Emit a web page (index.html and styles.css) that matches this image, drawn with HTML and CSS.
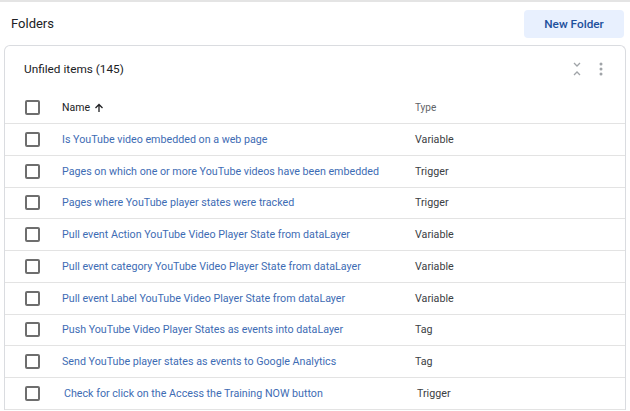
FILE: index.html
```html
<!DOCTYPE html>
<html>
<head>
<meta charset="utf-8">
<link rel="stylesheet" href="styles.css">
</head>
<body>
<div class="page">
  <div class="topbar">
    <div class="title">Folders</div>
    <button class="new-folder">New Folder</button>
  </div>
  <div class="card">
    <div class="card-head">
      <div class="card-title">Unfiled items (145)</div>
      <div class="card-actions">
        <svg class="ico" width="12" height="16" viewBox="0 0 12 16"><path d="M3 2l3 3 3-3M3 14l3-3 3 3" fill="none" stroke="#a0a4a8" stroke-width="1.3"/></svg>
        <svg class="ico" width="6" height="16" viewBox="0 0 6 16"><circle cx="3" cy="3" r="1.5" fill="#a0a4a8"/><circle cx="3" cy="8" r="1.5" fill="#a0a4a8"/><circle cx="3" cy="13" r="1.5" fill="#a0a4a8"/></svg>
      </div>
    </div>
    <div class="row head">
      <span class="cb"></span>
      <span class="name hname">Name <svg width="10" height="10" viewBox="0 0 10 10"><path d="M5 9V1.5M1.5 5L5 1.5 8.5 5" fill="none" stroke="#202124" stroke-width="1.3"/></svg></span>
      <span class="type htype">Type</span>
    </div>
    <div class="row"><span class="cb"></span><a class="name">Is YouTube video embedded on a web page</a><span class="type">Variable</span></div>
    <div class="row"><span class="cb"></span><a class="name">Pages on which one or more YouTube videos have been embedded</a><span class="type">Trigger</span></div>
    <div class="row"><span class="cb"></span><a class="name">Pages where YouTube player states were tracked</a><span class="type">Trigger</span></div>
    <div class="row"><span class="cb"></span><a class="name">Pull event Action YouTube Video Player State from dataLayer</a><span class="type">Variable</span></div>
    <div class="row"><span class="cb"></span><a class="name">Pull event category YouTube Video Player State from dataLayer</a><span class="type">Variable</span></div>
    <div class="row"><span class="cb"></span><a class="name">Pull event Label YouTube Video Player State from dataLayer</a><span class="type">Variable</span></div>
    <div class="row"><span class="cb"></span><a class="name">Push YouTube Video Player States as events into dataLayer</a><span class="type">Tag</span></div>
    <div class="row"><span class="cb"></span><a class="name">Send YouTube player states as events to Google Analytics</a><span class="type">Tag</span></div>
    <div class="row shifted"><span class="cb"></span><a class="name">Check for click on the Access the Training NOW button</a><span class="type">Trigger</span></div>
  </div>
</div>
</body>
</html>
```
FILE: styles.css
```css
* { box-sizing: border-box; }
html, body { margin: 0; padding: 0; background: #fff; }
body { font-family: Roboto, "Liberation Sans", Arial, sans-serif; color: #202124; overflow: hidden; }
.page { border-top: 2px solid #e4e4e4; width: 630px; height: 411px; }
.topbar { display: flex; align-items: center; justify-content: space-between; height: 43px; padding: 0 6px 0 11px; }
.title { font-size: 13px; color: #202124; }
.new-folder { width: 100px; height: 28px; border: none; border-radius: 4px; background: #e8f0fe; color: #1d4f9c; font-family: Roboto, sans-serif; font-size: 11.8px; font-weight: 500; margin-top: 0; }
.card { margin-left: 4px; width: 622px; border: 1px solid #dadce0; border-radius: 6px 6px 0 0; border-bottom: none; }
.card-head { display: flex; align-items: center; justify-content: space-between; height: 46px; padding: 0 21px 0 19px; }
.card-title { font-size: 11.8px; color: #202124; }
.card-actions { display: flex; gap: 15px; align-items: center; }
.row { display: flex; align-items: center; height: 31.75px; border-bottom: 1px solid #e3e3e3; padding-left: 20px; }
.row.head { height: 32px; }
.cb { width: 15px; height: 15px; border: 2px solid #6e6e6e; border-radius: 2px; flex: none; }
.name { width: 353px; margin-left: 22px; font-size: 10.7px; color: #3e6cb4; text-decoration: none; white-space: nowrap; }
.type { font-size: 10.7px; color: #3c4043; }
.hname { color: #202124; font-size: 10.5px; display: flex; align-items: center; gap: 4px; }
.htype { color: #5f6368; font-size: 10px; }
.shifted .name { margin-left: 24px; }
```
